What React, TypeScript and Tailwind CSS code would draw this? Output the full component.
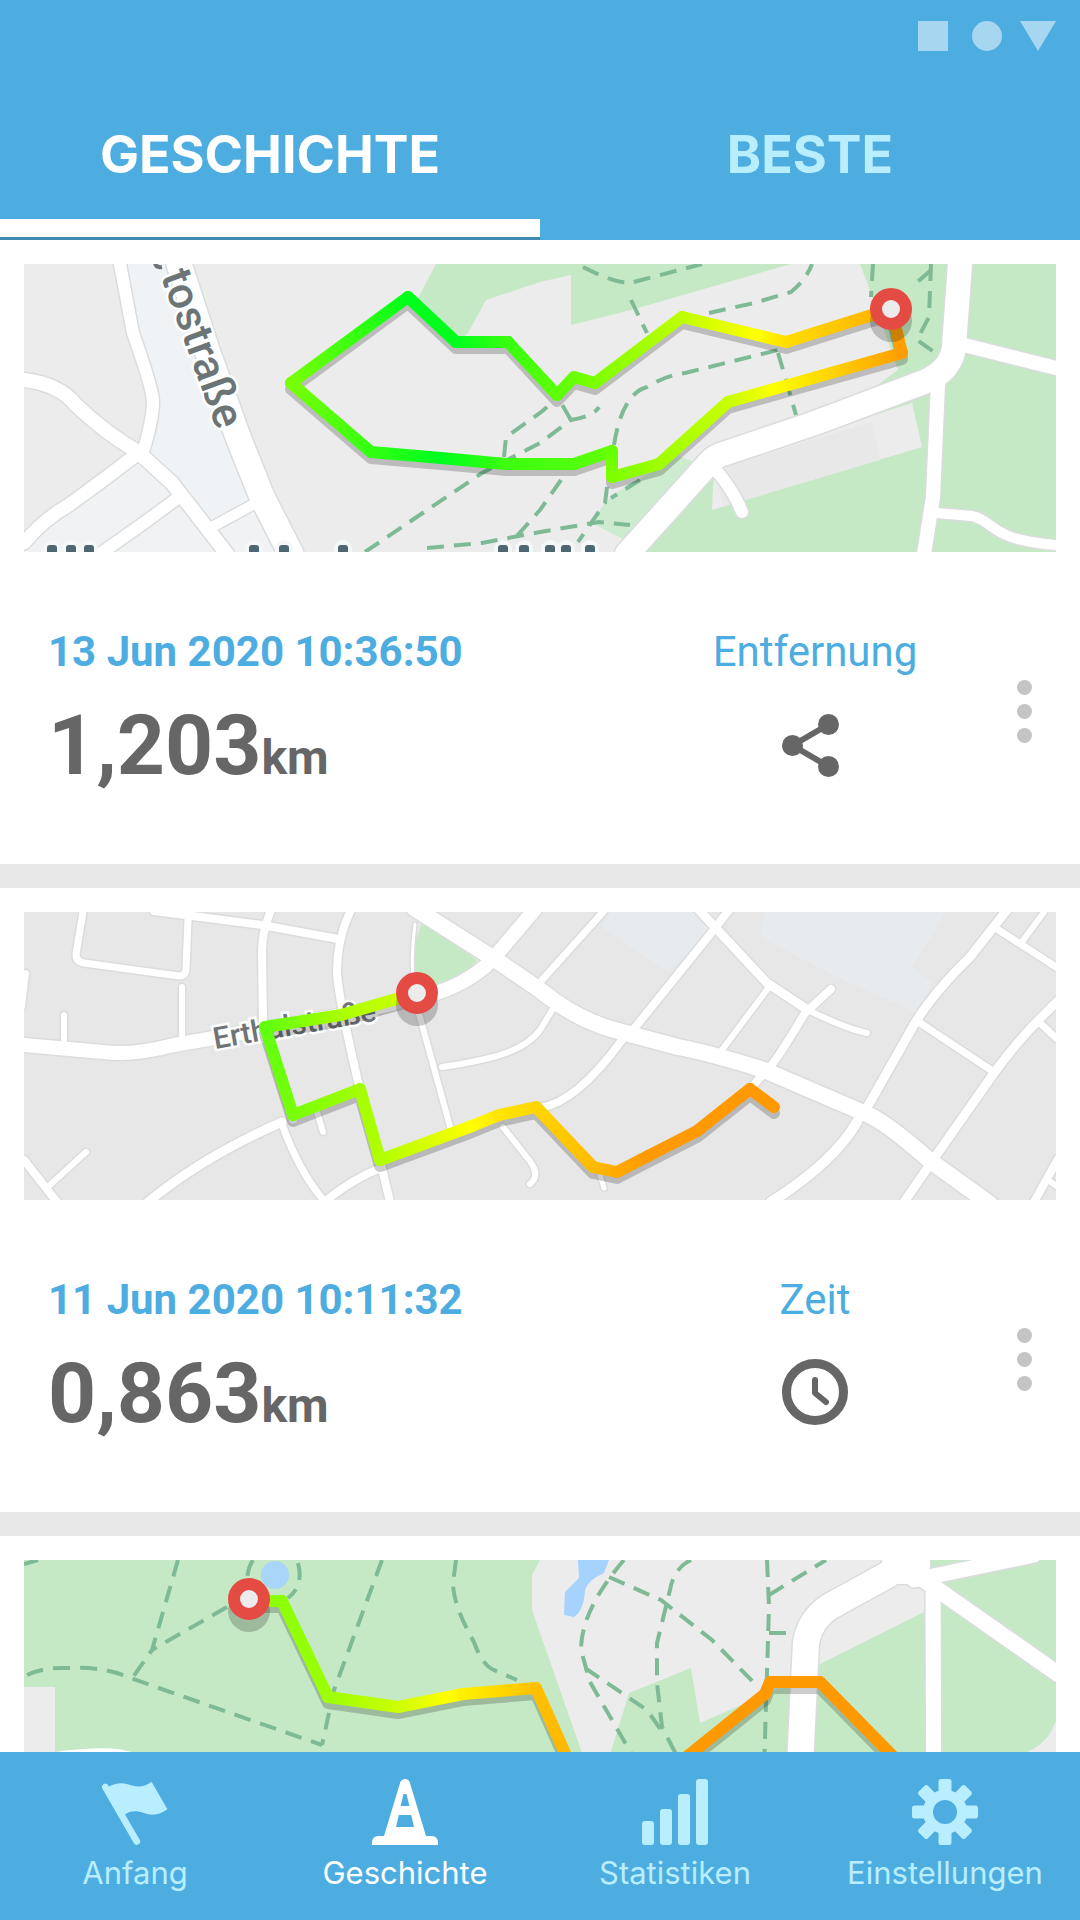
import { Fragment, useId, useState } from "react";
import type { ReactNode } from "react";
import clsx from "clsx";

type RoutePoint = [x: number, y: number, color: string];
type Road = [width: number, d: string];

interface MapData {
  label: string;
  background: string;
  areas: [fill: string, d: string][];
  roads: Road[];
  paths: string[];
  route: RoutePoint[];
  pin: [number, number];
  overlay?: ReactNode;
}

interface Activity {
  map: MapData;
  summary?: {
    date: string;
    distance: string;
    mode: string;
    icon: ReactNode;
  };
}

const GREEN = "#c5e9c5";

const parkLoop: MapData = {
  label: "Strecke am Park",
  background: "#ececec",
  areas: [
    ["#f0f3f5", "M96 0 L155 0 L238 233 L227 241 L188 263 L119 188 L129 133 Z"],
    ["#f0f2f4", "M114 188 L188 263 L227 241 L262 288 L0 288 L0 279 Z"],
    [GREEN, "M412 0 L393 36 L434 78 L444 69 L462 36 L516 18 L547 11 L547 61 L607 46 L767 0 Z"],
    [GREEN, "M836 0 L1032 0 L1032 288 L600 288 L688 210 L800 160 L874 106 L847 29 Z"],
    ["#cdebcf", "M655 192 L587 232 L566 258 L612 282 L690 205 Z"],
    ["#ececec", "M690 203 L888 139 L898 183 L688 246 Z"],
    ["#e8e8e8", "M690 206 L848 158 L856 196 L700 242 Z"],
  ],
  roads: [
    [12, "M96 0 L109 69 Q129 125 129 138 Q129 155 119 188"],
    [14, "M0 116 Q35 120 52 141 Q80 168 114 188 L148 219 L179 259 L203 290"],
    [13, "M116 188 L79 216 L45 241 Q20 255 0 279"],
    [12, "M155 233 L124 256 L76 290"],
    [10, "M188 263 L232 239"],
    [25, "M155 0 L183 86 L214 173 L238 233 L267 290"],
    [24, "M603 290 L685 199 Q692 191 702 189 L791 159 L900 118 Q928 106 930 82 L936 0"],
    [14, "M940 81 L1032 104"],
    [14, "M914 120 L909 233 L900 290"],
    [10, "M912 249 L948 252 C970 256 964 276 1032 281"],
    [12, "M690 204 Q709 225 718 248"],
  ],
  paths: [
    "M341 288 L458 209 L516 179 L547 156 Q570 152 575 143",
    "M547 156 L537 139",
    "M480 193 L482 173 L516 149 L530 137",
    "M559 3 Q590 19 606 19 L678 0",
    "M685 49 L730 39 L767 28 Q782 16 788 0",
    "M607 36 L623 69",
    "M590 181 Q598 130 623 123 Q640 112 661 109 L754 86",
    "M754 89 L762 116 L772 151",
    "M849 0 L847 33",
    "M907 0 L905 53 L893 76 L910 88",
    "M907 6 L888 23",
    "M537 216 L516 246 L492 273",
    "M403 284 L458 279 L516 268 L575 258 L606 261",
    "M583 223 L581 239 L554 278",
    "M616 216 L587 234",
  ],
  route: [
    [867, 45, "#ffae00"],
    [762, 78, "#ffdd00"],
    [733, 71, "#ffff00"],
    [658, 53, "#c0ff00"],
    [571, 119, "#7dff00"],
    [550, 113, "#6aff05"],
    [533, 131, "#5cff08"],
    [484, 78, "#38ff10"],
    [432, 78, "#00ff1e"],
    [384, 33, "#00ff1a"],
    [267, 119, "#78ff05"],
    [347, 188, "#33ff12"],
    [417, 194, "#00ff20"],
    [482, 200, "#3cff0f"],
    [550, 200, "#50ff0f"],
    [588, 187, "#66ff00"],
    [588, 213, "#7dff00"],
    [635, 200, "#9dff00"],
    [704, 138, "#c8ff00"],
    [750, 125, "#fdff00"],
    [878, 89, "#ff9d00"],
    [867, 45, "#ffa500"],
  ],
  pin: [867, 45],
  overlay: (
    <>
      <path d="M131 -1 Q132 4 138 3" fill="none" stroke="#6c7476" strokeWidth={4} />
      <text
        transform="translate(193 167) rotate(70)"
        textAnchor="end"
        className="font-[Roboto] text-[44px] font-medium"
        fill="#6c7476"
        stroke="#fdfefe"
        strokeWidth={5}
        paintOrder="stroke"
      >
        tostraße
      </text>
      {/* Tops of the district name below the crop */}
      {[28, 47, 65, 230, 260, 319, 479, 500, 526, 542, 566].map((x) => (
        <g key={x}>
          <circle cx={x} cy={285} r={9} fill="#f4f8f9" />
          <rect x={x - 5} y={281} width={10} height={10} rx={3} fill="#4d6773" />
        </g>
      ))}
    </>
  ),
};

const townWalk: MapData = {
  label: "Strecke Erthalstraße",
  background: "#e7e7e7",
  areas: [
    ["#e7ebee", "M585 0 L688 0 L688 20 L643 60 L578 15 Z"],
    ["#e7ebee", "M740 0 L922 0 L888 55 L909 71 L891 100 L819 68 L736 25 Z"],
    [GREEN, "M398 10 L453 48 Q438 68 415 73 L389 78 L391 31 Z"],
  ],
  roads: [
    [7, "M59 0 L52 42 Q52 50 60 51 L155 64 Q162 64 162 56 L164 8"],
    [6, "M158 75 L158 125"],
    [8, "M130 -1 L238 13 L314 27"],
    [8, "M247 -2 Q238 20 238 40 L239 111 L269 208"],
    [8, "M327 -2 Q313 26 313 60 Q314 85 336 178"],
    [8, "M357 252 L366 290"],
    [6, "M394 98 L427 218"],
    [6, "M418 155 C465 148 500 140 516 118 L530 95"],
    [9, "M124 290 Q180 244 258 210"],
    [7, "M258 212 Q275 260 301 290"],
    [8, "M300 290 Q330 266 357 256"],
    [8, "M0 248 L33 290"],
    [6, "M26 273 L62 240"],
    [6, "M40 103 L40 128"],
    [6, "M2 61 L-2 95"],
    [6, "M293 200 L299 220"],
    [6, "M479 215 L505 248 Q517 263 506 272"],
    [3, "M391 12 Q386 50 390 80"],
    [7, "M580 -1 L554 28 L518 68"],
    [9, "M674 -3 L743 71 L784 98"],
    [6, "M784 98 Q820 116 843 121"],
    [8, "M705 -2 L688 20 L609 118"],
    [6, "M745 75 L698 138"],
    [8, "M807 77 L781 101 Q752 150 743 158 L726 177"],
    [8, "M598 128 Q553 190 516 196"],
    [9, "M983 -2 L946 45 Q910 80 891 111 L840 201"],
    [10, "M833 210 Q810 250 747 290"],
    [7, "M970 15 L1032 55"],
    [6, "M1020 0 L998 30"],
    [7, "M896 111 L970 160"],
    [9, "M1034 89 Q1000 120 970 161 L909 248 L880 290"],
    [7, "M1016 111 L1032 126"],
    [8, "M1034 247 L1010 290"],
    [6, "M1024 268 L1034 275"],
    [5, "M576 263 L580 276"],
    [14, "M0 133 L90 141 Q115 142 150 133 L320 103 L399 85 Q442 74 468 48 L512 -4"],
    [16, "M390 -4 L472 48 L516 78 Q555 110 598 120 L654 135 Q690 142 740 158 L840 201 Q860 208 905 248 L966 292"],
  ],
  paths: [],
  route: [
    [393, 81, "#d4ff00"],
    [317, 103, "#aaff00"],
    [241, 115, "#60ff10"],
    [269, 203, "#77ff08"],
    [336, 177, "#a4ff00"],
    [356, 248, "#b0ff00"],
    [448, 214, "#ffff00"],
    [475, 203, "#ffe600"],
    [512, 195, "#ffd500"],
    [569, 255, "#ffbb00"],
    [593, 260, "#ffaa00"],
    [624, 244, "#ff9900"],
    [673, 219, "#ff9900"],
    [726, 177, "#ff9900"],
    [750, 195, "#ff9900"],
  ],
  pin: [393, 81],
  overlay: (
    <text
      transform="translate(191 137) rotate(-10)"
      className="font-[Roboto] text-[30px] font-medium"
      fill="#707375"
      stroke="#fbfcfc"
      strokeWidth={5}
      paintOrder="stroke"
    >
      Erthalstraße
    </text>
  ),
};

const gardenRun: MapData = {
  label: "Strecke im Garten",
  background: GREEN,
  areas: [
    ["#ececec", "M516 0 L905 0 L900 52 L798 103 L770 120 L736 137 L676 163 L667 108 L605 133 L575 230 L571 230 L508 50 L508 15 Z"],
    ["#ececec", "M0 127 L31 127 L31 230 L0 230 Z"],
    ["#ffffff", "M31 192 Q90 184 110 193 L110 200 L31 200 Z"],
    ["#ececec", "M1032 160 Q1025 185 996 195 L996 288 L1032 288 Z"],
    ["#a5d3fd", "M554 0 L585 0 L580 13 Q564 20 561 30 Q560 50 550 57 L540 55 L541 32 L555 18 Z"],
  ],
  roads: [
    [26, "M772 288 L782 82 Q786 60 805 47 L865 14"],
    [40, "M878 4 L886 4"],
    [15, "M890 20 L1010 -5"],
    [16, "M900 20 L1034 114"],
    [15, "M909 30 L910 288"],
  ],
  paths: [
    "M0 4 L14 0",
    "M154 0 L128 90 L109 117",
    "M203 47 L128 90",
    "M3 115 Q20 107 45 108 Q80 106 109 119 L298 185",
    "M358 0 L310 130 L298 185",
    "M432 0 L429 23 Q429 45 450 82 Q458 105 470 110 L493 120",
    "M229 0 Q222 10 223 30",
    "M274 3 Q280 26 264 38",
    "M600 0 Q557 50 557 90 L566 122 L618 212",
    "M561 108 L623 150 L637 170",
    "M585 17 L637 40 L688 80 L735 128",
    "M667 0 Q650 8 646 30 L633 83 L633 123 L638 167 L655 200",
    "M743 0 L745 47 L743 113 L740 210",
    "M745 35 L802 0",
    "M745 73 L764 73",
  ],
  route: [
    [225, 41, "#88ff08"],
    [258, 41, "#8cff08"],
    [304, 137, "#9cff05"],
    [374, 147, "#ccff00"],
    [424, 137, "#ffff00"],
    [439, 134, "#fff000"],
    [512, 128, "#ffc000"],
    [560, 236, "#ffb400"],
    [614, 236, "#ff9900"],
    [741, 134, "#ff9900"],
    [746, 122, "#ff9900"],
    [796, 122, "#ff9900"],
    [910, 238, "#ff9900"],
  ],
  pin: [225, 39],
  overlay: <circle cx={251} cy={15} r={14} fill="#a9d6f8" />,
};

function Route({ points }: { points: RoutePoint[] }) {
  const id = useId();
  const outline = points.map(([x, y]) => `${x},${y}`).join(" ");

  return (
    <g fill="none" strokeWidth={12} strokeLinecap="round" strokeLinejoin="round">
      <polyline points={outline} stroke="#000" strokeOpacity={0.2} transform="translate(0 6)" />
      {points.slice(1).map(([x, y, color], i) => {
        const [px, py, pcolor] = points[i];
        return (
          <Fragment key={i}>
            <linearGradient id={`${id}-${i}`} gradientUnits="userSpaceOnUse" x1={px} y1={py} x2={x} y2={y}>
              <stop stopColor={pcolor} />
              <stop offset="1" stopColor={color} />
            </linearGradient>
            <path d={`M${px} ${py} L${x} ${y}`} stroke={`url(#${id}-${i})`} />
          </Fragment>
        );
      })}
    </g>
  );
}

function RouteMap({ map }: { map: MapData }) {
  const [pinX, pinY] = map.pin;

  return (
    <svg
      viewBox="0 0 1032 288"
      preserveAspectRatio="xMidYMid slice"
      role="img"
      aria-label={map.label}
      className="block h-72 w-full"
    >
      <rect width="1032" height="288" fill={map.background} />
      {map.areas.map(([fill, d]) => (
        <path key={d} d={d} fill={fill} />
      ))}
      <g fill="none" strokeLinecap="round" strokeLinejoin="round">
        {map.roads.map(([width, d]) => (
          <path key={d} d={d} stroke="#dadcdd" strokeWidth={width + 3} />
        ))}
        {map.roads.map(([width, d]) => (
          <path key={d} d={d} stroke="#fff" strokeWidth={width} />
        ))}
      </g>
      <g fill="none" stroke="#7fba96" strokeWidth={4} strokeDasharray="17 10">
        {map.paths.map((d) => (
          <path key={d} d={d} />
        ))}
      </g>
      {map.overlay}
      <Route points={map.route} />
      {/* Start pin */}
      <circle cx={pinX} cy={pinY + 12} r={21} fill="#000" fillOpacity={0.2} />
      <circle cx={pinX} cy={pinY} r={15} fill="#ececec" stroke="#e44b43" strokeWidth={12} />
    </svg>
  );
}

const ShareIcon = () => (
  <svg viewBox="0 0 66 66" className="size-[66px]" fill="currentColor" aria-hidden="true">
    <path d="M46.5 13.5 L10.5 34.5 L46.5 55.5" fill="none" stroke="currentColor" strokeWidth={6} />
    <circle cx="46.5" cy="13.5" r="10.5" />
    <circle cx="10.5" cy="34.5" r="10.5" />
    <circle cx="46.5" cy="55.5" r="10.5" />
  </svg>
);

const ClockIcon = () => (
  <svg viewBox="0 0 66 66" className="size-[66px]" fill="none" stroke="currentColor" aria-hidden="true">
    <circle cx="33" cy="33" r="28.5" strokeWidth={9} />
    <path d="M33 21 L33 34 L44 43" strokeWidth={6} strokeLinecap="round" strokeLinejoin="round" />
  </svg>
);

const FlagIcon = () => (
  <svg viewBox="0 0 66 66" className="size-[66px]" fill="currentColor" aria-hidden="true">
    <path d="M3.3 8 L34.8 62.5" stroke="currentColor" strokeWidth={6.6} strokeLinecap="round" />
    <path d="M6.5 7.7 C17 2.5 23 4 30 6.5 C38 9 44 7 49.5 2.7 L65.4 30.3 C58 36 50 37 42 34 C34 31 28 32 22.7 35.5 L17 31 L5 10 Z" />
  </svg>
);

const ConeIcon = () => (
  <svg viewBox="0 0 66 66" className="size-[66px]" fill="currentColor" aria-hidden="true">
    <path
      fillRule="evenodd"
      d="M28.2 3.6 A5 5 0 0 1 37.8 3.6 L54 57 H60 A6 6 0 0 1 66 63 V66 H0 V63 A6 6 0 0 1 6 57 H12 Z M31.5 15 L28.6 27 H37.4 L34.5 15 Z M26.8 36 L24 48 H42 L39.2 36 Z"
    />
  </svg>
);

const BarsIcon = () => (
  <svg viewBox="0 0 66 66" className="size-[66px]" fill="currentColor" aria-hidden="true">
    <rect x="0" y="42" width="12" height="24" rx="3" />
    <rect x="18" y="30" width="12" height="36" rx="3" />
    <rect x="36" y="15" width="12" height="51" rx="3" />
    <rect x="54" y="0" width="12" height="66" rx="3" />
  </svg>
);

const GearIcon = () => (
  <svg viewBox="0 0 66 66" className="size-[66px]" fill="currentColor" aria-hidden="true">
    <circle cx="33" cy="33" r="17" fill="none" stroke="currentColor" strokeWidth={10} />
    {[0, 45, 90, 135, 180, 225, 270, 315].map((angle) => (
      <rect key={angle} x="26.5" y="0" width="13" height="15" rx="2.5" transform={`rotate(${angle} 33 33)`} />
    ))}
  </svg>
);

const activities: Activity[] = [
  {
    map: parkLoop,
    summary: { date: "13 Jun 2020 10:36:50", distance: "1,203", mode: "Entfernung", icon: <ShareIcon /> },
  },
  {
    map: townWalk,
    summary: { date: "11 Jun 2020 10:11:32", distance: "0,863", mode: "Zeit", icon: <ClockIcon /> },
  },
  { map: gardenRun },
];

const tabs = ["GESCHICHTE", "BESTE"];

const navItems = [
  { label: "Anfang", icon: <FlagIcon /> },
  { label: "Geschichte", icon: <ConeIcon /> },
  { label: "Statistiken", icon: <BarsIcon /> },
  { label: "Einstellungen", icon: <GearIcon /> },
];

function ActivityCard({ map, summary }: Activity) {
  return (
    <li className="bg-white">
      <div className="px-6 pt-6">
        <RouteMap map={map} />
      </div>
      {summary && (
        <div className="flex items-start gap-20 px-12 pt-[76px] pb-[70px]">
          <div className="flex-1">
            <p className="text-[42px] leading-[48px] font-bold text-[#4dade0]">{summary.date}</p>
            <p className="mt-[22px] text-[84px] leading-[96px] font-bold text-[#666]">
              {summary.distance}
              <span className="text-5xl">km</span>
            </p>
          </div>
          <button type="button" className="flex w-[244px] flex-col items-center gap-[35px] text-[#666]">
            <span className="text-[42px] leading-[48px] text-[#4dade0]">{summary.mode}</span>
            {summary.icon}
          </button>
          <button type="button" aria-label="Mehr" className="flex flex-col gap-[9px] self-center">
            <span className="size-[15px] rounded-full bg-[#c4c4c4]" />
            <span className="size-[15px] rounded-full bg-[#c4c4c4]" />
            <span className="size-[15px] rounded-full bg-[#c4c4c4]" />
          </button>
        </div>
      )}
    </li>
  );
}

export default function App() {
  const [activeTab, setActiveTab] = useState("GESCHICHTE");
  const [activeNav, setActiveNav] = useState("Geschichte");

  return (
    <div className="flex h-screen flex-col bg-white font-[Roboto,sans-serif]">
      <header className="bg-[#4dade0] font-[Inter,sans-serif]">
        {/* Status bar */}
        <div className="flex h-18 justify-end px-6 pt-[21px] text-white/50">
          <svg viewBox="0 0 138 30" className="h-[30px] w-[138px]" fill="currentColor" aria-hidden="true">
            <rect width="30" height="30" />
            <circle cx="69" cy="15" r="15" />
            <path d="M102 0 H138 L120 30 Z" />
          </svg>
        </div>
        <div className="grid grid-cols-2" role="tablist">
          {tabs.map((tab) => (
            <button
              key={tab}
              type="button"
              role="tab"
              aria-selected={tab === activeTab}
              onClick={() => setActiveTab(tab)}
              className={clsx(
                "flex h-42 flex-col justify-end text-[52px] leading-[64px] font-bold",
                tab === activeTab ? "text-white" : "text-[#b9eeff]"
              )}
            >
              <span className="mb-8 w-full text-center">{tab}</span>
              <span
                className={clsx(
                  "h-[21px] w-full border-b-3",
                  tab === activeTab ? "border-[#3e8ab3] bg-white" : "border-transparent"
                )}
              />
            </button>
          ))}
        </div>
      </header>

      <main className="min-h-0 flex-1 overflow-y-auto [scrollbar-width:none]">
        <ul className="flex flex-col gap-6 bg-[#e7e7e7]">
          {activities.map((activity) => (
            <ActivityCard key={activity.map.label} {...activity} />
          ))}
        </ul>
      </main>

      <nav className="grid h-42 shrink-0 grid-cols-4 bg-[#4dade0] font-[Inter,sans-serif]">
        {navItems.map((item) => (
          <button
            key={item.label}
            type="button"
            onClick={() => setActiveNav(item.label)}
            className={clsx(
              "flex flex-col items-center gap-[10px] pt-[27px] text-[31px] leading-9",
              item.label === activeNav ? "text-white" : "text-[#b9eeff]"
            )}
          >
            {item.icon}
            <span>{item.label}</span>
          </button>
        ))}
      </nav>
    </div>
  );
}
